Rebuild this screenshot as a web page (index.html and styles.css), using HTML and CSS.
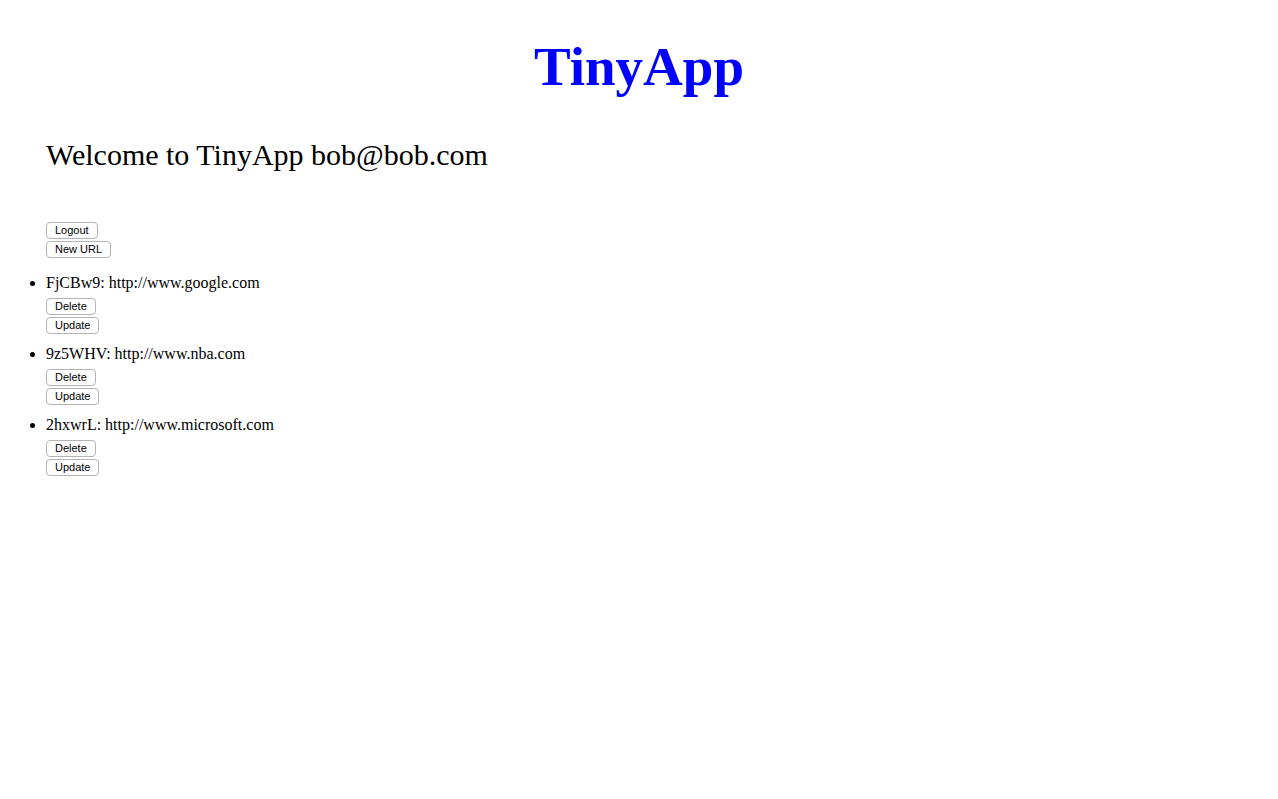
FILE: index.html
```html
<!DOCTYPE html>
<html>
<head>
<meta charset="utf-8">
<link rel="stylesheet" href="styles.css">
</head>
<body>
<h1 class="title">TinyApp</h1>
<div class="main">
  <h2 class="welcome">Welcome to TinyApp bob@bob.com</h2>
  <div class="actions">
    <button class="btn">Logout</button>
    <button class="btn">New URL</button>
  </div>
</div>
<ul class="urls">
  <li class="url-item">
    <div class="url-text">FjCBw9: http://www.google.com</div>
    <div class="actions">
      <button class="btn">Delete</button>
      <button class="btn">Update</button>
    </div>
  </li>
  <li class="url-item">
    <div class="url-text">9z5WHV: http://www.nba.com</div>
    <div class="actions">
      <button class="btn">Delete</button>
      <button class="btn">Update</button>
    </div>
  </li>
  <li class="url-item">
    <div class="url-text">2hxwrL: http://www.microsoft.com</div>
    <div class="actions">
      <button class="btn">Delete</button>
      <button class="btn">Update</button>
    </div>
  </li>
</ul>
</body>
</html>
```
FILE: styles.css
```css
html, body {
  margin: 0;
  padding: 0;
  background: #fff;
}
body {
  font-family: "Liberation Serif", "Times New Roman", serif;
  color: #000;
  padding: 0 8px;
}
.title {
  margin: 36px 0 0;
  text-align: center;
  color: #0000ff;
  font-size: 55px;
  font-weight: bold;
  line-height: 62px;
}
.main {
  padding-left: 38px;
}
.welcome {
  margin: 39px 0 0;
  font-weight: normal;
  font-size: 30px;
  line-height: 35px;
}
.main .actions {
  margin-top: 50px;
}
.actions {
  display: flex;
  flex-direction: column;
  align-items: flex-start;
  gap: 2px;
}
.btn {
  font-family: "Liberation Sans", Arial, sans-serif;
  font-size: 11px;
  line-height: 13px;
  padding: 1px 8px;
  border: 1px solid #b4b4b4;
  border-radius: 4px;
  background: #fff;
  color: #000;
  margin: 0;
}
.urls {
  margin: 16px 0 0;
  padding-left: 38px;
}
.url-item {
  margin-bottom: 11px;
}
.url-text {
  font-size: 16px;
  line-height: 18px;
  margin-bottom: 6px;
}
```
